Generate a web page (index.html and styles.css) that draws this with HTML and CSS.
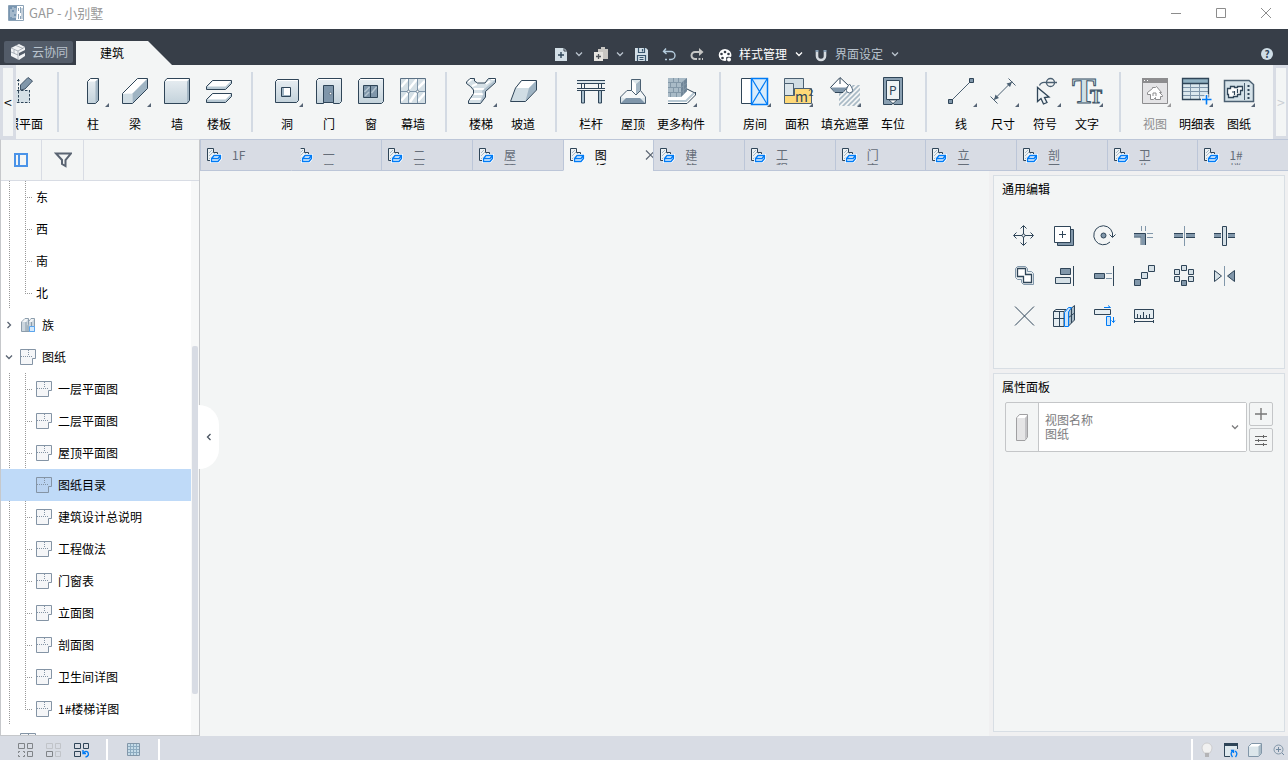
FILE: index.html
```html
<!DOCTYPE html>
<html lang="zh-CN">
<head>
    <meta charset="UTF-8" />
    <title>GAP - 小别墅</title>
    <link rel="stylesheet" href="styles.css">
</head>
<body>
<!-- 公用图标 -->
<svg class="defs" aria-hidden="true">
    <defs>
        <linearGradient id="face" x1="0" y1="0" x2="0" y2="1">
            <stop offset="0" stop-color="#e8eef2"/><stop offset="1" stop-color="#c3d2db"/>
        </linearGradient>
        <pattern id="hatch" width="5" height="5" patternUnits="userSpaceOnUse">
            <path d="M-1 6L6 -1M-1 1L1 -1M4 6L6 4" stroke="#a9bac6" stroke-width="1.6"/>
        </pattern>
    </defs>
    <symbol id="i-chev" viewBox="0 0 8 8"><path d="M1 2.5L4 5.5L7 2.5" fill="none" stroke="currentColor" stroke-width="1.3"/></symbol>
    <symbol id="i-corner" viewBox="0 0 4 4"><path d="M4 0V4H0Z" fill="#566475"/></symbol>
    <symbol id="i-view" viewBox="0 0 16 16">
        <path d="M1.5 1.5H7.5V5.5H11.5V13.5H1.5Z" fill="#edf1f3" stroke="#2f4558"/>
        <path d="M3 6L6 3M3 9L7 5M3 12L9 6" stroke="#a9bac6"/>
        <path d="M5.5 14.5V11.5L8 8.5H14.5V11.5L12 14.5Z" fill="#fff" stroke="#fff" stroke-width="3"/>
        <path d="M5.5 14.5V11.5L8 8.5H14.5V11.5L12 14.5ZM5.5 11.5H12L14.5 8.5" fill="#e3f0fc" stroke="#007bf5" stroke-width="1.3"/>
    </symbol>
    <symbol id="i-sheet" viewBox="0 0 16 16">
        <path d="M.5 .5H15.5V9.5H12.5V15.5H.5Z" fill="#8090a0" fill-opacity=".08" stroke="#8494a5"/>
        <path d="M1 7.5H12M8.5 1V7" fill="none" stroke="#8494a5" stroke-dasharray="1 1"/>
    </symbol>
</svg>

<header class="titlebar">
    <svg class="logo" width="16" height="16" viewBox="0 0 16 16">
        <path d="M.5 .5H15.5V15.5H.5Z" fill="#fff" stroke="#8ba2b7"/><path d="M1 1H9L8 15H1Z" fill="#7895b0"/>
        <path d="M3 4V12M5 2V5M5 7V13M7 3V9M7 11V13" stroke="#d0dce6"/><path d="M10.5 3V6M12.500 2V8M14 3V14M10.500 9V14M12.500 11V14" stroke="#8ba2b7"/>
    </svg>
    <h1>GAP - 小别墅</h1>
    <div class="win-btns">
        <button aria-label="最小化"><svg width="12" height="12"><path d="M1 6.500H11"/></svg></button>
        <button aria-label="最大化"><svg width="12" height="12"><path d="M1.500 1.500H10.500V10.500H1.500Z"/></svg></button>
        <button aria-label="关闭"><svg width="12" height="12"><path d="M1 1L11 11M11 1L1 11"/></svg></button>
    </div>
</header>

<nav class="menubar">
    <button class="cloud">
        <svg width="16" height="18" viewBox="0 0 16 18"><path d="M1 5L9 1L15 4V7L9 10V13L15 10V13L9 17L1 13Z" fill="#f0f2f4"/><path d="M1 5L8 8L15 4M8 8V17M1 9L8 12M6 2.500L13 5.500M4 7V10" fill="none" stroke="#8d959f" stroke-width=".7"/></svg>
        云协同
    </button>
    <button class="menu-tab">建筑</button>
    <div class="quick">
        <button aria-label="新建"><svg width="12" height="13" viewBox="0 0 12 13"><path d="M0 0H9L12 3V13H0Z" fill="#d3dfe7"/><path d="M9 0V3H12" fill="none" stroke="#373e48"/><path d="M3 7H9M6 4V10" stroke="#2f4558" stroke-width="1.400"/></svg></button>
        <button class="drop" aria-label="新建选项"><svg width="8" height="8"><use href="#i-chev"/></svg></button>
        <button aria-label="粘贴"><svg width="14" height="14" viewBox="0 0 14 14"><path d="M4 2H7V0H11V2H14V12H9V5H4Z" fill="#c8c6c2"/><path d="M0 5H9V14H0Z" fill="#e6e4e0"/><path d="M2 9.500H7M4.500 7V12" stroke="#4c5158" stroke-width="1.300"/></svg></button>
        <button class="drop" aria-label="粘贴选项"><svg width="8" height="8"><use href="#i-chev"/></svg></button>
        <button aria-label="保存"><svg width="13" height="13" viewBox="0 0 13 13"><path d="M0 0H11L13 2V13H0Z" fill="#d3dfe7"/><path d="M3.500 0V4.500H9.500V0M7.500 1V3.500M2.500 13V7.500H10.500V13M4.500 9.500H8.500M4.500 11.500H8.500" fill="none" stroke="#39566e" stroke-width="1.200"/></svg></button>
        <button class="step" aria-label="撤销"><svg width="14" height="13" viewBox="0 0 14 13"><path d="M4 .5L1.500 3.500L4.500 6M2 3.500H9A4 4 0 0 1 9 11.500H7M5 11.500H3" fill="none" stroke="#b4cbdc" stroke-width="1.400"/></svg></button>
        <button class="step" aria-label="重做"><svg width="14" height="13" viewBox="0 0 14 13"><path d="M9 0L13.500 4L9 8Z" fill="#c6c6c4"/><path d="M10 4H5A3.500 3.500 0 0 0 5 11H7M8.500 11H10.500M12 11H13" fill="none" stroke="#c6c6c4" stroke-width="2"/></svg></button>
        <button class="word step on"><svg width="14" height="14" viewBox="0 0 14 14"><path d="M7 1A6.300 6 0 1 0 7 13Q9 13 8 10Q8 8 13 9A6.300 6 0 0 0 7 1Z" fill="#fff"/><g fill="#373e48"><circle cx="7" cy="4" r="1.300"/><circle cx="3.500" cy="6" r="1.300"/><circle cx="4.500" cy="10" r="1.300"/><circle cx="10.500" cy="6" r="1.300"/><circle cx="10" cy="11" r="1"/></g><circle cx="11" cy="11.500" r="2" fill="#fff"/></svg>样式管理</button>
        <button class="drop on" aria-label="样式管理选项"><svg width="8" height="8"><use href="#i-chev"/></svg></button>
        <button class="word"><svg width="14" height="14" viewBox="0 0 14 14"><path d="M3 4V8A4 4 0 0 0 11 8V4" fill="none" stroke="#d5dadf" stroke-width="2.600"/><path d="M1.500 3H4.500M9.500 3H12.500" stroke="#8ba2b7" stroke-width="2"/></svg>界面设定</button>
        <button class="drop" aria-label="界面设定选项"><svg width="8" height="8"><use href="#i-chev"/></svg></button>
    </div>
    <button class="help" aria-label="帮助">?</button>
</nav>

<section class="ribbon">
    <button class="scroll-l" aria-label="向左">&lt;</button>
    <div class="ribbon-view">
        <div class="groups">
            <div class="group">
                <button class="tool wide"><svg viewBox="0 0 32 32"><path d="M6 15H27V28H6Z" fill="#d5e0e6"/><path d="M6 5.500H18M6 15.500H27M6 27.500H27M15.500 4V28M26.500 15V28" fill="none" stroke="#2f4558" stroke-dasharray="2.500 1.500"/><path d="M17.500 10L25 2.500L29.500 6L22 14L17.500 15Z" fill="#8197aa" stroke="#3f5366"/></svg><span>参照平面</span></button>
            </div>
            <div class="group">
                <button class="tool"><svg viewBox="0 0 32 32"><path d="M10.500 6.500L13.500 3.500H21.500V25.500L18.500 28.500H10.500Z" fill="url(#face)"/><path d="M10.500 6.500L13.500 3.500H21.500L18.500 6.500Z" fill="#fff"/><path d="M18.500 6.500L21.500 3.500V25.500L18.500 28.500Z" fill="#a3b6c4"/><path d="M10.500 6.500L13.500 3.500H21.500V25.500L18.500 28.500H10.500Z" fill="none" stroke="#2f4558"/><use href="#i-corner" x="28" y="28" width="4" height="4"/></svg><span>柱</span></button>
                <button class="tool"><svg viewBox="0 0 32 32"><path d="M3.500 18.500H13.500V28.500H3.500Z" fill="#d0dde4"/><path d="M3.500 18.500L18.500 3.500H28.500L13.500 18.500Z" fill="#fff"/><path d="M13.500 18.500L28.500 3.500V13.500L13.500 28.500Z" fill="#9fb4c3"/><path d="M3.500 18.500L18.500 3.500H28.500V13.500L13.500 28.500H3.500Z" fill="none" stroke="#2f4558"/><use href="#i-corner" x="28" y="28" width="4" height="4"/></svg><span>梁</span></button>
                <button class="tool"><svg viewBox="0 0 32 32"><path d="M3.500 6.500L6 3.500H28.500V25.500L26 28.500H3.500Z" fill="url(#face)"/><path d="M4 6L6 4H28L26 6Z" fill="#fff"/><path d="M26 6.500L28.500 4V25.500L26 28.500Z" fill="#a3b6c4"/><path d="M3.500 6.500L6 3.500H28.500V25.500L26 28.500H3.500Z" fill="none" stroke="#2f4558"/></svg><span>墙</span></button>
                <button class="tool"><svg viewBox="0 0 32 32"><g stroke="#2f4558"><path d="M3.500 11.500L9.500 5.500H28.500V8.500L22.500 14.500H3.500Z" fill="#b7c8d3"/><path d="M3.500 24.500L9.500 18.500H28.500V21.500L22.500 27.500H3.500Z" fill="#b7c8d3"/></g><path d="M4.500 11.500L10 6H28L22.500 11.500ZM4.500 24.500L10 19H28L22.500 24.500Z" fill="#fff"/></svg><span>楼板</span></button>
            </div>
            <div class="group">
                <button class="tool"><svg viewBox="0 0 32 32"><path d="M4.500 6.500L6.500 4.500H27.500V25.500L25.500 27.500H4.500Z" fill="url(#face)" stroke="#2f4558"/><path d="M6 6H26L27 5H7Z" fill="#fff"/><path d="M10.500 12.500H19.500V21.500H10.500Z" fill="#fff" stroke="#2f4558"/><path d="M11 13H13V20H19V21H11Z" fill="#9fb4c3"/><use href="#i-corner" x="28" y="28" width="4" height="4"/></svg><span>洞</span></button>
                <button class="tool"><svg viewBox="0 0 32 32"><path d="M3.500 5.500L5.500 3.500H28.500V26.500L26.500 28.500H20.500V27.500H10.500V28.500H3.500Z" fill="url(#face)" stroke="#2f4558"/><path d="M5 5H26L27.500 4H6Z" fill="#fff"/><path d="M10.500 10.500H20.500V27.500H10.500Z" fill="#7f96aa" stroke="#2f4558"/><circle cx="17.500" cy="18.500" r="1.200" fill="#fff" stroke="#2f4558" stroke-width=".6"/></svg><span>门</span></button>
                <button class="tool"><svg viewBox="0 0 32 32"><path d="M3.500 5.500L5.500 3.500H28.500V26.500L26.500 28.500H3.500Z" fill="url(#face)" stroke="#2f4558"/><path d="M5 5H26L27.500 4H6Z" fill="#fff"/><path d="M8.500 10.500H22.500V22.500H8.500Z" fill="#7f96aa" stroke="#2f4558"/><path d="M9.500 17L14.500 12M16.500 18L21.500 12M10 21L14 17" stroke="#b4c5d0" stroke-width="1.500"/><path d="M15.500 11V22" stroke="#2f4558"/></svg><span>窗</span></button>
                <button class="tool"><svg viewBox="0 0 32 32"><path d="M3.500 3.500H28.500V28.500H3.500Z" fill="#d5e0e6"/><path d="M4 12L11 4M12 14L20 4M21 13L28 6M4 26L11 18M13 27L19 18M21 26L28 18" stroke="#fff" stroke-width="2.500"/><path d="M11.500 4V28M20.500 4V28M4 16.500H28" stroke="#7f96aa"/><path d="M3.500 3.500H28.500V28.500H3.500Z" fill="none" stroke="#5a7084"/><circle cx="11.500" cy="16.500" r="1.300" fill="#fff" stroke="#5a7084" stroke-width=".7"/><circle cx="20.500" cy="16.500" r="1.300" fill="#fff" stroke="#5a7084" stroke-width=".7"/></svg><span>幕墙</span></button>
            </div>
            <div class="group">
                <button class="tool"><svg viewBox="0 0 32 32"><path d="M1.500 7L5 3.500H9.500V6L12.500 8H20L23.500 3.500H30.500V7.500L20.500 16.500V22L15.500 28.500H3.500V26L8.500 18.500V15L5.500 11.500L1.500 8.500Z" fill="#d5e0e6"/><path d="M3 7L7 4M7 11L12 9M9 14H19M8 19H19M5 24H17M21 9L25 6M26 4H30" stroke="#fff" stroke-width="2"/><path d="M17 16L30 5V7.500L20.500 16.500V22L15.500 28.500V25L18 20Z" fill="#9fb4c3" opacity=".7"/><path d="M1.500 7L5 3.500H9.500V6L12.500 8H20L23.500 3.500H30.500V7.500L20.500 16.500V22L15.500 28.500H3.500V26L8.500 18.500V15L5.500 11.500L1.500 8.500Z" fill="none" stroke="#2f4558"/><use href="#i-corner" x="28" y="28" width="4" height="4"/></svg><span>楼梯</span></button>
                <button class="tool"><svg viewBox="0 0 32 32"><path d="M3.500 26.500L8.500 13L14.500 5.500H29.500V15L18.500 26.500Z" fill="#d0dde4"/><path d="M9 13L15 6H29L22 13Z" fill="#fff"/><path d="M18.500 26L22 13L29 6V15Z" fill="#9fb4c3"/><path d="M3.500 26.500L8.500 13L14.500 5.500H29.500V15L18.500 26.500Z" fill="none" stroke="#2f4558"/></svg><span>坡道</span></button>
            </div>
            <div class="group">
                <button class="tool"><svg viewBox="0 0 32 32"><path d="M2 5.500H30M2 8.500H30M2 13.500H30M2 15.500H30" stroke="#2f4558"/><path d="M2 7H30" stroke="#dbe5ea" stroke-width="2"/><path d="M6.500 9V13M9.500 9V13M23.500 9V13M26.500 9V13" stroke="#2f4558"/><path d="M6.500 15.500H9.500V28H6.500ZM23.500 15.500H26.500V28H23.500Z" fill="#a9bfcd" stroke="#2f4558"/></svg><span>栏杆</span></button>
                <button class="tool"><svg viewBox="0 0 32 32"><path d="M3.500 22L10 15.500H24L28.500 22V28.500H3.500Z" fill="#dbe5ea"/><path d="M3.500 22L10 15.500H14.500L19 20L24 15.500L28.500 22L23 24H9Z" fill="#f4f7f8"/><path d="M4 28L9 23H23L28 28Z" fill="#7f96aa"/><path d="M14.500 4.500H23.500L19 9Z" fill="#dbe5ea"/><path d="M14.500 5L19 9V20L14.500 15.500Z" fill="#fff"/><path d="M19 9L23.500 5V15.500L19 20Z" fill="#a3b6c4"/><path d="M3.500 22L10 15.500H14.500V4.500H23.500V15.500L28.500 22V28.500H3.500ZM14.500 15.500L19 20L23.500 15.500" fill="none" stroke="#4b6072"/></svg><span>屋顶</span></button>
                <button class="tool wide"><svg viewBox="0 0 32 32"><path d="M3 22H16L22 15L30.500 19.500L22 29H3Z" fill="#fff"/><path d="M3 28.500H22L30.500 20V17" fill="none" stroke="#2f4558"/><path d="M3 26H21L29 18" fill="none" stroke="#b7c8d3" stroke-width="2"/><path d="M3 3H22V16L16 22H3Z" fill="#a9bbc7"/><path d="M16 8L22 3V16L16 22Z" fill="#6f8598"/><path d="M3 7.500H16M3 12.500H16M3 17.500H16M8.500 3V7M13.500 3V7M5.500 8V12M11.500 8V12M8.500 13V17M13.500 13V17M5.500 18V22M11.500 18V22M18.500 6V19M16 12.500L22 8M16 17.500L22 12" fill="none" stroke="#8398a8"/><path d="M22 14L30 18" stroke="#2f4558"/><use href="#i-corner" x="28" y="28" width="4" height="4"/></svg><span>更多构件</span></button>
            </div>
            <div class="group">
                <button class="tool"><svg viewBox="0 0 32 32"><path d="M2.500 3.500H12.500V28.500H2.500Z" fill="#fff" stroke="#2f4558"/><path d="M12.500 3.500H28.500V29.500H12.500Z" fill="#d9ecfb" stroke="#007bf5" stroke-width="1.500"/><path d="M13 4L28 29M28 4L13 29" stroke="#007bf5" stroke-width="1.200"/><use href="#i-corner" x="28" y="28" width="4" height="4"/></svg><span>房间</span></button>
                <button class="tool"><svg viewBox="0 0 32 32"><path d="M3.500 3.500H22.500V13.500H13.500V20.500H3.500Z" fill="#d0dde4" stroke="#4b6072"/><path d="M3.500 20.500H13.500V13.500H30.500V28.500H3.500Z" fill="#ffd978" stroke="#4b6072"/><path d="M3.500 8.500H12.500V20.500H3.500Z" fill="#dbe5ea" stroke="#4b6072"/><text x="14" y="27" font-size="14" fill="#2f4558">m²</text><use href="#i-corner" x="28" y="28" width="4" height="4"/></svg><span>面积</span></button>
                <button class="tool wide"><svg viewBox="0 0 32 32"><path d="M10 10H31V31H10Z" fill="url(#hatch)"/><path d="M1.500 12.500L11 2.500L19.500 10.500L14 17.500H6Z" fill="#fff" stroke="#2f4558"/><path d="M2 12.500H18L14 17H6Z" fill="#7f96aa"/><path d="M11 3V9" stroke="#2f4558"/><path d="M20.500 9Q16 15 18 17Q20.500 19 23 17Q25 15 20.500 9Z" fill="#fff" stroke="#5a7084"/><use href="#i-corner" x="28" y="28" width="4" height="4"/></svg><span>填充遮罩</span></button>
                <button class="tool"><svg viewBox="0 0 32 32"><path d="M6.500 2.500H25.500V29.500H17L16 27.500L15 29.500H6.500Z" fill="#8aa0b2" stroke="#2f4558"/><path d="M9.500 5.500H22.500V24.500H9.500Z" fill="#eef3f5" stroke="#2f4558"/><path d="M12 25H20L16 28.500Z" fill="#fff" stroke="#2f4558" stroke-width=".8"/><text x="12" y="20" font-size="12" fill="#2f4558">P</text></svg><span>车位</span></button>
            </div>
            <div class="group">
                <button class="tool"><svg viewBox="0 0 32 32"><path d="M5.500 26.500L26.500 5.500" stroke="#4b6072"/><path d="M3.500 24.500H7.500V28.500H3.500ZM24.500 3.500H28.500V7.500H24.500Z" fill="#7f96aa" stroke="#2f4558"/><use href="#i-corner" x="28" y="28" width="4" height="4"/></svg><span>线</span></button>
                <button class="tool"><svg viewBox="0 0 32 32"><path d="M7 24.500L25 6.500M3.500 21.500L10.500 28.500M21.500 3.500L28.500 10.500" stroke="#4b6072"/><path d="M7 25L8.500 19.500L12 23ZM25 7L19.500 8.500L23 12Z" fill="#4b6072"/><use href="#i-corner" x="28" y="28" width="4" height="4"/></svg><span>尺寸</span></button>
                <button class="tool"><svg viewBox="0 0 32 32"><circle cx="21.500" cy="7.500" r="4" fill="none" stroke="#4b6072" stroke-width="1.300"/><path d="M10.500 10.500Q12 6.500 17 7.500H28" fill="none" stroke="#4b6072" stroke-width="1.300"/><path d="M8.500 12.500V26.500L12 23.500L14.500 29L18 27.500L15.500 22.500L20 22Z" fill="#eef3f5" stroke="#2f4558" stroke-width="1.300"/><use href="#i-corner" x="28" y="28" width="4" height="4"/></svg><span>符号</span></button>
                <button class="tool"><svg viewBox="0 0 32 32"><g class="serif" fill="#d0e0e6" stroke="#3f5669"><text x="1" y="28" font-size="36">T</text><text x="19" y="28" font-size="18">T</text></g><use href="#i-corner" x="28" y="28" width="4" height="4"/></svg><span>文字</span></button>
            </div>
            <div class="group">
                <button class="tool" disabled><svg viewBox="0 0 32 32"><path d="M3.500 3.500H28.500V28.500H3.500Z" fill="#e4e4e6" stroke="#8d8d8f"/><path d="M3 3H29V8H3Z" fill="#8d8d8f"/><path d="M5 5.500H6M8 5.500H9" stroke="#fff"/><path d="M8.500 17.500L13.500 13.500V12.500H16.500L17.500 11.500L22.500 17.500H20.500L23.500 20.500V21.500H21.500V24.500H16.500V22.500L14.500 24.500H11.500V19.500H8.500Z" fill="#fff" stroke="#8d8d8f"/><path d="M14 21V18H17V21" fill="none" stroke="#8d8d8f"/><path d="M32 28V32H28Z" fill="#9a9a9c"/></svg><span>视图</span></button>
                <button class="tool"><svg viewBox="0 0 32 32"><path d="M1.500 3.500H27.500V24.500H1.500Z" fill="#dbe8ee"/><path d="M2 4H27V8H2Z" fill="#8fb0c1"/><path d="M2 12.500H27M2 16.500H27M2 20.500H27M9.500 8V24M18.500 8V24" stroke="#7f96aa"/><path d="M1.500 3.500H27.500V24.500H1.500ZM1.500 8.500H27.500" fill="none" stroke="#2f4558" stroke-width="1.300"/><path d="M20 24.500H31M25.500 19V31" stroke="#f3f5f5" stroke-width="4"/><path d="M32 28V32H28Z" fill="#566475"/><path d="M21 24.500H30.500M25.500 20V29.500" stroke="#007bf5" stroke-width="1.600"/></svg><span>明细表</span></button>
                <button class="tool"><svg viewBox="0 0 32 32"><path d="M1.500 5.500H26L30.500 9.500V26.500H1.500Z" fill="#d5e2e9" stroke="#4b6072" stroke-width="1.500"/><path d="M4.500 13.500H7.500V11.500H11.500V12.500H14.500V11.500H19.500V15.500H17.500V19.500H14.500V21.500H10.500V22.500H5.500V19.500H4.500Z" fill="#fff" stroke="#2f4558" stroke-width="1.300"/><path d="M9 17H11M11.500 16V20M14.500 14V18" stroke="#2f4558" stroke-width="1.200"/><path d="M21.500 8V25" stroke="#4b6072"/><path d="M25.500 10V12M25.500 14V16M25.500 18V20M25.500 22V24" stroke="#2f4558" stroke-width="2"/><use href="#i-corner" x="28" y="28" width="4" height="4"/></svg><span>图纸</span></button>
            </div>
        </div>
    </div>
    <button class="scroll-r" aria-label="向右" disabled>&gt;</button>
</section>

<main>
    <aside class="side">
        <div class="side-bar">
            <button aria-label="项目浏览器"><svg width="14" height="14"><path d="M1 1H13V13H1ZM5 1V13" fill="none" stroke="#4a93e8" stroke-width="2"/></svg></button>
            <button aria-label="筛选"><svg width="18" height="16" viewBox="0 0 18 16"><path d="M2 1.500H17L11.500 8V14L8 12V8Z" fill="none" stroke="#5a6472" stroke-width="2"/></svg></button>
        </div>
        <div class="side-body">
            <ul class="tree">
                <li><a class="leaf" href="#">东</a></li>
                <li><a class="leaf" href="#">西</a></li>
                <li><a class="leaf" href="#">南</a></li>
                <li><a class="leaf last" href="#">北</a></li>
                <li><a class="node closed" href="#"><svg class="arrow" width="8" height="8"><use href="#i-chev"/></svg><svg width="16" height="16" viewBox="0 0 16 16"><path d="M1.500 5L5 1.500H8.500V5L11 1.500H14.500V14.500H1.500Z" fill="#cbd6de" stroke="#8c9dac"/><path d="M2 5L5 2H8L6 5ZM9 5L11 2H14L12 5Z" fill="#f2f5f7"/><path d="M6 5V14M8.500 5V10M11.500 5V9" fill="none" stroke="#8c9dac"/><path d="M6.500 9L9 7V14H6.500Z" fill="#a4b5c1"/><path d="M9.500 9.500H14.500V14.500H9.500Z" fill="#d5e9fb" stroke="#5aa5ee"/></svg>族</a></li>
                <li><a class="node" href="#"><svg class="arrow" width="8" height="8"><use href="#i-chev"/></svg><svg width="16" height="16"><use href="#i-sheet"/></svg>图纸</a></li>
                <li><a class="leaf" href="#"><svg width="16" height="16"><use href="#i-sheet"/></svg>一层平面图</a></li>
                <li><a class="leaf" href="#"><svg width="16" height="16"><use href="#i-sheet"/></svg>二层平面图</a></li>
                <li><a class="leaf" href="#"><svg width="16" height="16"><use href="#i-sheet"/></svg>屋顶平面图</a></li>
                <li><a class="leaf active" href="#"><svg width="16" height="16"><use href="#i-sheet"/></svg>图纸目录</a></li>
                <li><a class="leaf" href="#"><svg width="16" height="16"><use href="#i-sheet"/></svg>建筑设计总说明</a></li>
                <li><a class="leaf" href="#"><svg width="16" height="16"><use href="#i-sheet"/></svg>工程做法</a></li>
                <li><a class="leaf" href="#"><svg width="16" height="16"><use href="#i-sheet"/></svg>门窗表</a></li>
                <li><a class="leaf" href="#"><svg width="16" height="16"><use href="#i-sheet"/></svg>立面图</a></li>
                <li><a class="leaf" href="#"><svg width="16" height="16"><use href="#i-sheet"/></svg>剖面图</a></li>
                <li><a class="leaf" href="#"><svg width="16" height="16"><use href="#i-sheet"/></svg>卫生间详图</a></li>
                <li><a class="leaf last" href="#"><svg width="16" height="16"><use href="#i-sheet"/></svg>1#楼梯详图</a></li>
                <li><a class="node empty" href="#" aria-label="其他"><svg width="16" height="16"><use href="#i-sheet"/></svg></a></li>
            </ul>
            <div class="track"><div class="thumb"></div></div>
        </div>
        <button class="fold" aria-label="收起"><svg width="8" height="8"><use href="#i-chev"/></svg></button>
    </aside>

    <div class="work">
        <div class="tabs">
            <button class="tab"><svg width="16" height="16"><use href="#i-view"/></svg><span>1F</span></button>
            <button class="tab cut"><svg width="16" height="16"><use href="#i-view"/></svg><span>一层平面图</span></button>
            <button class="tab"><svg width="16" height="16"><use href="#i-view"/></svg><span>二层平面图</span></button>
            <button class="tab"><svg width="16" height="16"><use href="#i-view"/></svg><span>屋顶平面图</span></button>
            <button class="tab active"><svg width="16" height="16"><use href="#i-view"/></svg><span>图纸目录</span><svg class="close" width="10" height="12"><path d="M1 1.500L10 10.500M10 1.500L1 10.500" stroke="#5a6472" stroke-width="1.200"/></svg></button>
            <button class="tab"><svg width="16" height="16"><use href="#i-view"/></svg><span>建筑设计总说明</span></button>
            <button class="tab"><svg width="16" height="16"><use href="#i-view"/></svg><span>工程做法</span></button>
            <button class="tab"><svg width="16" height="16"><use href="#i-view"/></svg><span>门窗表</span></button>
            <button class="tab"><svg width="16" height="16"><use href="#i-view"/></svg><span>立面图</span></button>
            <button class="tab"><svg width="16" height="16"><use href="#i-view"/></svg><span>剖面图</span></button>
            <button class="tab"><svg width="16" height="16"><use href="#i-view"/></svg><span>卫生间详图</span></button>
            <button class="tab"><svg width="16" height="16"><use href="#i-view"/></svg><span>1#楼梯详图</span></button>
        </div>
        <div class="work-body">
            <div class="canvas"></div>
            <div class="panels">
                <section class="panel">
                    <h2>通用编辑</h2>
                    <div class="edit">
                        <button aria-label="移动"><svg viewBox="0 0 24 24"><path d="M11.500 2V10M11.500 13V21M2 11.500H10M13 11.500H21M8.500 4.500L11.500 1.500L14.500 4.500M8.500 18.500L11.500 21.500L14.500 18.500M4.500 8.500L1.500 11.500L4.500 14.500M18.500 8.500L21.500 11.500L18.500 14.500"/><circle cx="11.500" cy="11.500" r="1.500"/></svg></button>
                        <button aria-label="复制"><svg viewBox="0 0 24 24"><path d="M5.500 5.500H21.500V21.500H5.500Z" fill="#8197aa"/><path d="M2.500 2.500H18.500V18.500H2.500Z" fill="#fff"/><path d="M7 10.500H14M10.500 7V14"/></svg></button>
                        <button aria-label="旋转"><svg viewBox="0 0 24 24"><path d="M18 18A9.500 9.500 0 1 1 20.500 9V13M17.500 10.500L20.500 13.500L23.500 10.500"/><circle cx="11.500" cy="11.500" r="2.500" fill="#8197aa"/></svg></button>
                        <button aria-label="修剪"><svg viewBox="0 0 24 24"><path d="M9.500 2V7M13.500 2V7M15 9.500H21M15 13.500H21" stroke="#8197aa"/><path d="M2 9.500H13.500V21H9.500V13.500H2Z" fill="#8197aa" stroke="none"/><path d="M2 9.500H13.500V21"/><path d="M2 13H9V21" stroke="#5a7084"/></svg></button>
                        <button aria-label="打断"><svg viewBox="0 0 24 24"><path d="M2 9H11V14H2ZM14 9H23V14H14Z" fill="#8197aa" stroke="none"/><path d="M2 9.500H11M14 9.500H23M2 13.500H11M14 13.500H23"/><path d="M12.500 2V22" stroke="#8197aa"/></svg></button>
                        <button aria-label="拆分"><svg viewBox="0 0 24 24"><path d="M2 9H9V14H2ZM16 9H23V14H16Z" fill="#8197aa" stroke="none"/><path d="M2 9.500H9M16 9.500H23M2 13.500H9M16 13.500H23"/><path d="M10.500 2.500H14.500V21.500H10.500Z" fill="#d5e0e6"/></svg></button>
                        <button aria-label="偏移"><svg viewBox="0 0 24 24"><path d="M5.500 2.500H13.500L15.500 4.500V7.500H19.500L21.500 9.500V20.500H11.500L9.500 18.500V15.500H5.500L3.500 13.500V4.500Z" fill="#eef3f5" stroke="#8197aa"/><path d="M5.500 4.500H13.500V10.500H19.500V18.500H11.500V12.500H5.500Z" fill="#fff" stroke-width="1.300"/></svg></button>
                        <button aria-label="对齐"><svg viewBox="0 0 24 24"><path d="M8.500 4.500H18.500V10.500H8.500Z" fill="#8197aa"/><path d="M3.500 13.500H18.500V19.500H3.500Z" fill="#d5e0e6"/><path d="M21.500 2V22"/></svg></button>
                        <button aria-label="延伸"><svg viewBox="0 0 24 24"><path d="M2.500 9.500H12.500V14.500H2.500Z" fill="#8197aa"/><path d="M14 9.500H20M14 14.500H20" stroke="#8197aa"/><path d="M21.500 2V22"/></svg></button>
                        <button aria-label="线性阵列"><svg viewBox="0 0 24 24"><path d="M2.500 15.500H8.500V21.500H2.500Z" fill="#8197aa"/><path d="M9.500 8.500H15.500V14.500H9.500ZM16.500 1.500H22.500V7.500H16.500Z" fill="#d5e0e6"/></svg></button>
                        <button aria-label="环形阵列"><svg viewBox="0 0 24 24"><path d="M9.500 1.500H14.500V6.500H9.500ZM2.500 5.500H7.500V10.500H2.500ZM16.500 5.500H21.500V10.500H16.500ZM2.500 12.500H7.500V17.500H2.500ZM16.500 12.500H21.500V17.500H16.500Z" fill="#d5e0e6"/><path d="M9.500 16.500H14.500V21.500H9.500Z" fill="#8197aa"/></svg></button>
                        <button aria-label="镜像"><svg viewBox="0 0 24 24"><path d="M2.500 6.500L9.500 12L2.500 17.500Z" fill="#d5e0e6"/><path d="M22.500 6.500L15.500 12L22.500 17.500Z" fill="#8197aa"/><path d="M12.500 2V22" stroke="#8197aa"/></svg></button>
                        <button aria-label="删除"><svg viewBox="0 0 24 24"><path d="M3 2.500L22 21.500M22 2.500L3 21.500"/></svg></button>
                        <button aria-label="组合"><svg viewBox="0 0 24 24"><path d="M1.500 7.500H12V22.500H1.500Z" fill="#e5edf1"/><path d="M1.500 7.500L4 5.500H14L12 7.500M7.500 8V22M2 14.500H12"/><path d="M15.500 7.500L22.500 1.500V16L16.500 22Z" fill="#a9bbc7"/><path d="M19.500 4V19M16 14L22.500 9"/><path d="M12.500 8.500L16.500 3.500H19.500L16.500 8V22.500H12.500Z" fill="#cde5fb" stroke="#007bf5"/></svg></button>
                        <button aria-label="匹配"><svg viewBox="0 0 24 24"><path d="M2.500 5.500H18.500V10.500H2.500Z" fill="#e5edf1"/><path d="M14.500 12.500H18.500V21.500H14.500Z" fill="#cde5fb" stroke="#007bf5"/><path d="M12 3.500H18.500L16 1.500M21.500 13V18.500M19.500 16.500L21.500 18.500L23 16.500" stroke="#007bf5"/></svg></button>
                        <button aria-label="测量"><svg viewBox="0 0 24 24"><path d="M2.500 5.500H21.500V14.500H2.500Z" fill="#e5edf1"/><path d="M5.500 14V10M8.500 14V11M11.500 14V8M14.500 14V11M17.500 14V10M2.500 16V19M21.500 16V19M3 17.500H21"/></svg></button>
                    </div>
                </section>
                <section class="panel grow">
                    <h2>属性面板</h2>
                    <div class="props">
                        <div class="field">
                            <svg width="32" height="48" viewBox="0 0 32 48"><path d="M10.500 15L13.500 11.500H21.500V34L19 37.500H10.500Z" fill="#e5e5e6" stroke="#a0a0a2"/><path d="M11 15L14 12H21L19 15Z" fill="#fff"/><path d="M19 15L21 13V34L19 37Z" fill="#c3c3c6"/></svg>
                            <label for="view">视图名称</label>
                            <select id="view"><option>图纸</option></select>
                            <svg class="caret" width="8" height="8"><use href="#i-chev"/></svg>
                        </div>
                        <div class="props-btns">
                            <button aria-label="新增"><svg width="14" height="14"><path d="M1 7H13M7 1V13" stroke="#777" stroke-width="1.400"/></svg></button>
                            <button aria-label="设置"><svg width="14" height="14"><path d="M1 3.500H13M1 7.500H13M1 11.500H13M9.500 2V5M4.500 6V9M9.500 10V13" stroke="#666"/></svg></button>
                        </div>
                    </div>
                </section>
            </div>
        </div>
    </div>
</main>

<footer class="status">
    <button aria-label="框选"><svg width="16" height="16"><path d="M.5 1.500H6.500V6.500H.5ZM9.500 1.500H14.500V6.500H9.500ZM9.500 9.500H14.500V14.500H9.500ZM.5 11V9.500H2M5 9.500H6.500V11M6.500 13V14.500H5M2 14.500H.5V13" fill="none" stroke="#808488"/></svg></button>
    <button aria-label="单选"><svg width="16" height="16"><path d="M.5 1.500H6.500V6.500H.5ZM9.500 1.500H14.500V6.500H9.500ZM9.500 9.500H14.500V14.500H9.500Z" fill="none" stroke="#c1c4c9"/><path d="M.5 9.500H6.500V14.500H.5Z" fill="none" stroke="#808488"/></svg></button>
    <button aria-label="重新选择"><svg width="16" height="16"><path d="M.5 1.500H6.500V6.500H.5ZM9.500 1.500H14.500V6.500H9.500ZM.5 9.500H6.500V14.500H.5Z" fill="none" stroke="#2f4558"/><path d="M9 8V11.500H12M9.500 11Q12 8 14 10.500Q15.500 14 11.500 15" fill="none" stroke="#007bf5" stroke-width="1.400"/></svg></button>
    <i class="bar"></i>
    <button class="mesh" aria-label="网格"><svg width="16" height="16"><path d="M1.500 1.500H13.500V13.500H1.500Z" fill="#c5dbe8" stroke="#8296a8"/><path d="M4.500 2V13M7.500 2V13M10.500 2V13M2 4.500H13M2 7.500H13M2 10.500H13" stroke="#8dabc0"/></svg></button>
    <i class="bar"></i>
    <div class="status-r">
        <i class="bar"></i>
        <button aria-label="提示"><svg width="16" height="16"><path d="M5 11Q3 8 3 6A5 5 0 0 1 13 6Q13 8 11 11Z" fill="#f1f1f1" stroke="#c6c6c8" stroke-width=".8"/><path d="M6 11H10V15H6Z" fill="#b4b4b6"/></svg></button>
        <button aria-label="窗口"><svg width="16" height="16"><path d="M1.500 2.500H14.500V14.500H1.500Z" fill="#dfe9ee" stroke="#2f4558"/><path d="M1 1H15V4H1Z" fill="#2f4558"/><path d="M7 7H16V16H7Z" fill="#d8dce4"/><path d="M9.500 15Q6.500 11 10 9M12.500 15Q15.500 11 12 9M8 8.500H10.500V11" fill="none" stroke="#007bf5" stroke-width="1.300"/></svg></button>
        <button aria-label="三维"><svg width="16" height="16"><path d="M1.500 4.500L4.500 1.500H14.500V11.500L11.500 14.500H1.500Z" fill="#dce6eb" stroke="#8296a8"/><path d="M2 4.500L5 2H14L11.500 4.500Z" fill="#fff"/><path d="M11.500 4.500L14 2V11.500L11.500 14Z" fill="#a9bbc7"/></svg></button>
        <button aria-label="缩放"><svg width="16" height="16"><circle cx="7.500" cy="7.500" r="4.500" fill="none" stroke="#8296a8"/><path d="M5 7.500H10M7.500 5V10M11 11L13 13" stroke="#7189a0"/></svg></button>
    </div>
</footer>
</body>
</html>
```
FILE: styles.css
```css
*{
    box-sizing:border-box;
}
body{
    margin:0;
    height:100vh;
    display:flex;
    flex-direction:column;
    overflow:hidden;
    background:#f3f5f5;
    color:#000;
    font:12px/16px "Noto Sans CJK SC", sans-serif;
}
button{
    padding:0;
    border:0;
    background:none;
    color:inherit;
    font:inherit;
}
h1, h2{
    margin:0;
    font-size:12px;
    font-weight:normal;
}
ul{
    margin:0;
    padding:0;
    list-style:none;
}
a{
    color:inherit;
    text-decoration:none;
}
svg{
    flex:none;
    display:block;
}
.defs{
    position:absolute;
    width:0;
    height:0;
}

/* 标题栏 */
.titlebar{
    flex:none;
    height:29px;
    display:flex;
    align-items:center;
    padding-left:8px;
    padding-bottom:3px;
    background:#fff;
    color:#999;
}
.titlebar h1{
    margin-left:5px;
    font-size:13px;
}
.win-btns{
    margin-left:auto;
    display:flex;
}
.win-btns button{
    width:45px;
    height:26px;
    display:flex;
    align-items:center;
    justify-content:center;
}
.win-btns path{
    fill:none;
    stroke:#8c8c8c;
}

/* 菜单栏 */
.menubar{
    flex:none;
    height:36px;
    display:flex;
    align-items:flex-end;
    padding-left:4px;
    background:#373e48;
    color:#b9c3cd;
}
.cloud{
    width:69px;
    height:22px;
    margin:0 3px 2px 0;
    display:flex;
    align-items:center;
    gap:6px;
    padding-left:6px;
    border-radius:2px;
    background:#535c69;
    white-space:nowrap;
}
.menu-tab{
    width:96px;
    height:24px;
    padding-right:24px;
    background:#f3f5f5;
    color:#000;
    clip-path:polygon(0 0, 72px 0, 100% 100%, 0 100%);
}
.quick{
    height:22px;
    margin-left:383px;
    display:flex;
    align-items:center;
}
.quick .drop{
    width:8px;
    margin:0 11px 0 8px;
}
.quick .step{
    margin-left:14px;
}
.quick .word{
    display:flex;
    align-items:center;
    gap:7px;
}
.quick .word svg{
    margin-top:2px;
}
.quick .on{
    color:#fff;
}
.help{
    width:12px;
    height:12px;
    margin:0 15px 5px auto;
    border-radius:50%;
    background:#cfdde6;
    color:#2f4558;
    font-size:10px;
    line-height:12px;
    font-weight:bold;
}

/* 功能区 */
.ribbon{
    flex:none;
    height:74px;
    display:flex;
}
.scroll-l, .scroll-r{
    flex:none;
    display:flex;
    align-items:center;
    justify-content:center;
    border:solid #d8dce4;
    font-size:14px;
}
.scroll-l{
    width:16px;
    border-width:3px 3px 3px 3px;
}
.scroll-r{
    width:15px;
    border-width:3px 2px 3px 3px;
    color:#c9cdd3;
}
.ribbon-view{
    flex:1;
    min-width:0;
    overflow:hidden;
}
.groups{
    display:flex;
    margin-left:-24px;
    padding-top:7px;
}
.group{
    flex:none;
    height:60px;
    display:flex;
    padding-right:11px;
}
.group + .group{
    padding-left:13px;
    border-left:2px solid #d3dae3;
}
.tool{
    width:42px;
    display:flex;
    flex-direction:column;
    align-items:center;
    gap:9px;
    padding-top:3px;
}
.tool.wide{
    width:54px;
}
.tool svg{
    width:32px;
    height:32px;
    overflow:visible;
}
.tool span{
    white-space:nowrap;
}
.tool:disabled{
    color:#8d8d8f;
}
.serif{
    font-family:"Liberation Serif", serif;
    font-weight:bold;
}

/* 主体 */
main{
    flex:1;
    min-height:0;
    display:flex;
}
.side{
    position:relative;
    flex:none;
    width:200px;
    display:flex;
    flex-direction:column;
    border:1px solid #c6c8cb;
    border-top-color:#d8dce4;
    background:#fff;
}
.side-bar{
    flex:none;
    height:41px;
    display:flex;
    border-bottom:1px solid #d8dce4;
    background:#f3f5f5;
}
.side-bar button{
    width:41px;
    display:flex;
    align-items:center;
    justify-content:center;
    border-right:1px solid #d8dce4;
}
.side-bar button + button{
    width:42px;
}
.side-body{
    flex:1;
    min-height:0;
    display:flex;
}
.tree{
    flex:1;
    min-width:0;
    overflow:hidden;
}
.tree a{
    height:32px;
    display:flex;
    align-items:center;
    gap:6px;
    white-space:nowrap;
}
.tree .node{
    padding-left:4px;
}
.tree .node svg + svg{
    margin-left:1px;
}
.tree .empty{
    padding-left:19px;
}
.arrow{
    color:#5a6472;
}
.closed .arrow{
    transform:rotate(-90deg);
}
.tree .leaf{
    padding-left:35px;
    background:
        repeating-linear-gradient(to bottom, #999 0 1px, transparent 1px 2px) 8px 0/1px 100% no-repeat,
        repeating-linear-gradient(to bottom, #999 0 1px, transparent 1px 2px) 24px 0/1px 100% no-repeat,
        repeating-linear-gradient(to right, #999 0 1px, transparent 1px 2px) 24px 16px/8px 1px no-repeat;
}
.tree .last{
    background-size:1px 100%, 1px 16px, 8px 1px;
}
.tree .active{
    background:#bfdaf8;
}
.track{
    flex:none;
    width:8px;
    padding:165px 1px 0;
    background:#f7f8f8;
}
.thumb{
    height:348px;
    border-radius:2px;
    background:#d8dce4;
}
.fold{
    position:absolute;
    z-index:1;
    left:197px;
    top:265px;
    width:21px;
    height:64px;
    display:flex;
    align-items:center;
    justify-content:center;
    border-radius:0 20px 20px 0;
    background:#fff;
    color:#4a5460;
}
.fold svg{
    transform:rotate(90deg);
}

/* 视图标签 */
.work{
    flex:1;
    min-width:0;
    display:flex;
    flex-direction:column;
}
.tabs{
    flex:none;
    height:32px;
    display:flex;
    border-top:1px solid #bcc6d8;
}
.tab{
    flex:1;
    min-width:0;
    display:flex;
    align-items:flex-start;
    gap:10px;
    padding:7px 0 0 5px;
    border:solid #bcc6d8;
    border-width:0 0 1px 1px;
    background:#d8dce4;
    color:#656d78;
    overflow:hidden;
}
.tab span{
    width:16px;
    height:17px;
    margin-top:1px;
    line-height:14px;
    text-align:left;
    word-break:break-all;
    overflow:hidden;
}
.tab.cut{
    border-left-color:#d8dce4;
}
.tab.cut svg{
    clip-path:inset(0 0 0 4px);
}
.tab.active{
    border-bottom-color:#f3f5f5;
    background:#f3f5f5;
    color:#000;
}
.close{
    margin:2px -2px 0 auto;
}
.work-body{
    flex:1;
    min-height:0;
    display:flex;
}
.canvas{
    flex:1;
}

/* 右侧面板 */
.panels{
    flex:none;
    width:299px;
    display:flex;
    flex-direction:column;
    gap:4px;
    padding:4px 3px 4px 4px;
    background:#f0f0f1;
}
.panel{
    min-height:194px;
    padding:5px 8px;
    border:1px solid #d8dee4;
    background:#f3f5f5;
}
.panel.grow{
    flex:1;
}
.edit{
    display:grid;
    grid-template-columns:repeat(6, 40px);
    grid-auto-rows:40px;
    margin:19px 2px 0;
}
.edit button{
    display:flex;
    align-items:center;
    justify-content:center;
}
.edit svg{
    width:24px;
    height:24px;
    fill:none;
    stroke:#2f4558;
}
.props{
    display:flex;
    gap:2px;
    margin:7px 3px;
}
.field{
    flex:1;
    height:50px;
    display:grid;
    grid-template-columns:32px 1fr 19px;
    border:1px solid #c4c6c8;
    border-radius:2px;
    color:#7c7c7e;
    line-height:14px;
}
.field label{
    grid-area:1/2;
    z-index:1;
    height:14px;
    margin:10px 0 0 7px;
    pointer-events:none;
}
.field select{
    grid-area:1/2/2/4;
    appearance:none;
    padding:13px 20px 0 6px;
    border:0;
    border-left:1px solid #c4c6c8;
    background:#fff;
    color:inherit;
    font:inherit;
}
.caret{
    grid-area:1/3;
    align-self:center;
    margin-left:4px;
    pointer-events:none;
}
.props-btns{
    display:grid;
    gap:2px;
}
.props-btns button{
    width:24px;
    height:24px;
    display:flex;
    align-items:center;
    justify-content:center;
    border:1px solid #c4c6c8;
    border-radius:2px;
}

/* 状态栏 */
.status{
    flex:none;
    height:24px;
    display:flex;
    align-items:center;
    gap:12px;
    padding:3px 1px 0 18px;
    background:#d8dce4;
}
.bar{
    width:2px;
    height:21px;
    background:#fff;
}
.status > .bar{
    margin-left:4px;
}
.mesh{
    margin:0 2px 0 6px;
}
.status .mesh + .bar{
    margin-left:2px;
}
.status-r{
    margin-left:auto;
    display:flex;
    align-items:center;
    gap:8px;
}
.status-r .bar{
    margin-right:-2px;
}
```
